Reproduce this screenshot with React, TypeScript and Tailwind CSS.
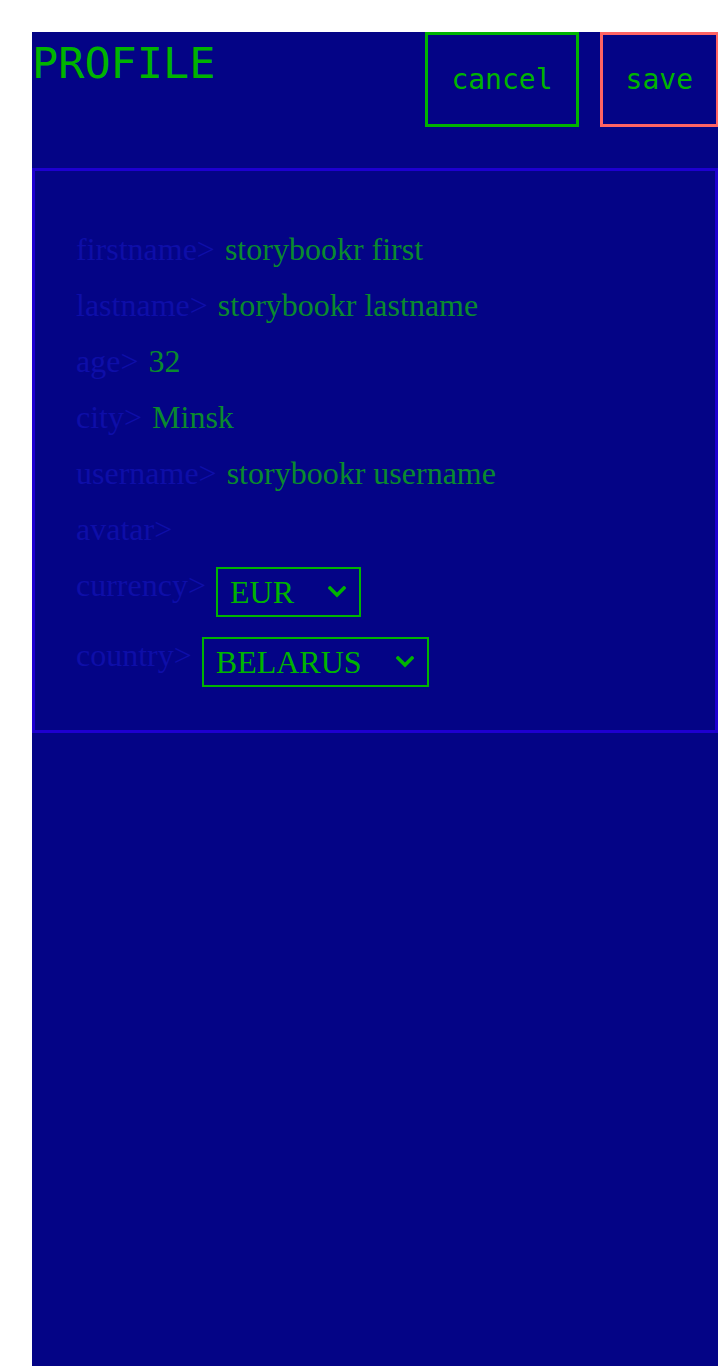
import React from "react";

interface Field {
  label: string;
  value?: string;
}

const fields: Field[] = [
  { label: "firstname", value: "storybookr first" },
  { label: "lastname", value: "storybookr lastname" },
  { label: "age", value: "32" },
  { label: "city", value: "Minsk" },
  { label: "username", value: "storybookr username" },
  { label: "avatar" },
];

const Chevron = () => (
  <svg width="18" height="12" viewBox="0 0 18 12" className="shrink-0">
    <polyline
      points="2,2 9,9 16,2"
      fill="none"
      stroke="#00b400"
      strokeWidth="3.5"
      strokeLinecap="square"
    />
  </svg>
);

const Select = ({ value }: { value: string }) => (
  <div className="flex h-[50px] items-center gap-[34px] border-2 border-[#00b400] pl-[12px] pr-[13px] text-[#00b400]">
    <span className="leading-none">{value}</span>
    <Chevron />
  </div>
);

export default function App() {
  return (
    <div className="min-h-screen bg-white pl-[32px] pt-[32px]">
      <div className="min-h-[1334px] bg-[#040486]">
        <div className="flex items-start justify-between">
          <h1 className="pt-[6px] font-['DejaVu_Sans_Mono',monospace] text-[43.5px] leading-[1.164] text-[#00b400]">
            PROFILE
          </h1>
          <div className="-mr-[1px] flex gap-[21px] font-['DejaVu_Sans_Mono',monospace] text-[28px] text-[#00b400]">
            <button className="flex h-[95px] items-center border-[3px] border-[#00b400] px-[23px]">
              cancel
            </button>
            <button className="flex h-[95px] items-center border-[3px] border-[#ff6464] px-[23px]">
              save
            </button>
          </div>
        </div>

        <div className="mt-[41px] border-[3px] border-[#1e00d0] px-[41px] pt-[60px] pb-[43px] font-['Liberation_Serif',serif] text-[32px] leading-[36px]">
          {fields.map((f) => (
            <div key={f.label} className="mb-[20px] flex items-start gap-[10px]">
              <span className="text-[#0e0ea8]">{f.label}&gt;</span>
              {f.value && <span className="text-[#0a8a2e]">{f.value}</span>}
            </div>
          ))}
          <div className="mb-[20px] flex items-start gap-[10px]">
            <span className="text-[#0e0ea8]">currency&gt;</span>
            <Select value="EUR" />
          </div>
          <div className="flex items-start gap-[10px]">
            <span className="text-[#0e0ea8]">country&gt;</span>
            <Select value="BELARUS" />
          </div>
        </div>
      </div>
    </div>
  );
}
